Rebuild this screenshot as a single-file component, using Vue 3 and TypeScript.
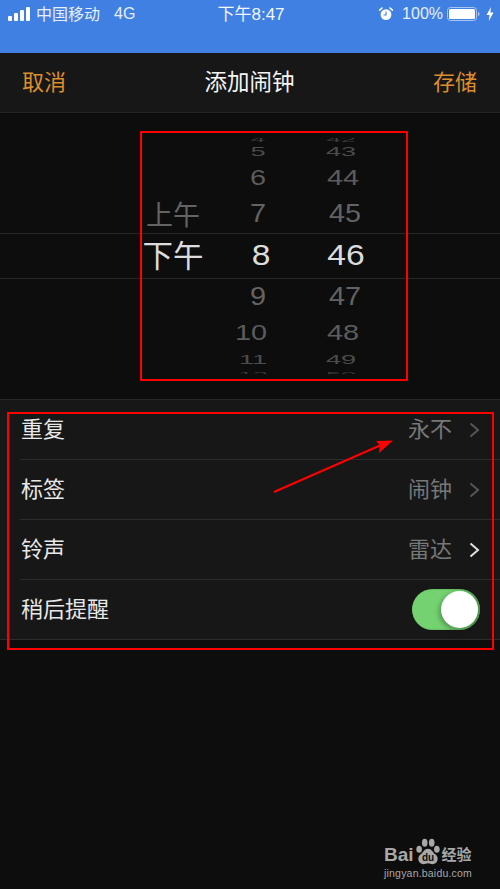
<script setup lang="ts">
interface WheelRow {
  ampm: string
  hour: string
  minute: string
  height: number
  sx: number
  sy: number
  hourX: number
  minuteX: number
  color: string
}

const wheelRows: WheelRow[] = [
  { ampm: '', hour: '4', minute: '42', height: 1, sx: 0.95, sy: 0.25, hourX: 0, minuteX: -4, color: '#3c3c3c' },
  { ampm: '', hour: '5', minute: '43', height: 26, sx: 0.97, sy: 0.47, hourX: 0, minuteX: -4, color: '#4c4c4c' },
  { ampm: '', hour: '6', minute: '44', height: 26, sx: 1.03, sy: 0.82, hourX: 0, minuteX: -2, color: '#5c5c5c' },
  { ampm: '上午', hour: '7', minute: '45', height: 46, sx: 1.03, sy: 0.93, hourX: 0, minuteX: 0, color: '#636363' },
  { ampm: '下午', hour: '8', minute: '46', height: 38, sx: 1.2, sy: 1.03, hourX: 3, minuteX: 1, color: '#dcdcdc' },
  { ampm: '', hour: '9', minute: '47', height: 44, sx: 1.03, sy: 0.93, hourX: 0, minuteX: 0, color: '#636363' },
  { ampm: '', hour: '10', minute: '48', height: 28, sx: 1.03, sy: 0.82, hourX: -7, minuteX: -2, color: '#5c5c5c' },
  { ampm: '', hour: '11', minute: '49', height: 26, sx: 0.97, sy: 0.47, hourX: -5, minuteX: -4, color: '#4c4c4c' },
  { ampm: '', hour: '12', minute: '50', height: 1, sx: 0.95, sy: 0.25, hourX: -5, minuteX: -4, color: '#3c3c3c' },
]

const settings = [
  { label: '重复', value: '永不', chevron: '#565656' },
  { label: '标签', value: '闹钟', chevron: '#565656' },
  { label: '铃声', value: '雷达', chevron: '#e0e0e0' },
]
</script>

<template>
  <div class="screen">
    <header class="status">
      <div class="status-left">
        <svg class="signal" width="22" height="14" viewBox="0 0 22 14">
          <rect x="0" y="9" width="4" height="5" rx="1" />
          <rect x="6" y="6" width="4" height="8" rx="1" />
          <rect x="12" y="3" width="4" height="11" rx="1" />
          <rect x="18" y="0" width="4" height="14" rx="1" />
        </svg>
        <span class="status-cjk">中国移动</span>
        <span class="net">4G</span>
      </div>
      <div class="status-cjk status-time">下午8:47</div>
      <div class="status-right">
        <svg width="14" height="14" viewBox="0 0 14 14">
          <circle cx="7" cy="7.6" r="5.4" fill="#fff" />
          <path d="M7 4.6V8H4.6" fill="none" stroke="#4180e3" stroke-width="1.1" />
          <path d="M0.6 3.2L3 1M13.4 3.2L11 1" stroke="#fff" stroke-width="1.6" stroke-linecap="round" />
        </svg>
        <span class="pct">100%</span>
        <svg class="battery" width="33" height="14" viewBox="0 0 33 14">
          <rect x="0.5" y="0.5" width="29" height="13" rx="3" fill="none" stroke="#a9c6f2" />
          <rect x="2" y="2" width="26" height="10" rx="1.5" fill="#fff" />
          <path d="M31 5v4c1-.3 1.6-1 1.6-2S32 5.300 31 5z" fill="#a9c6f2" />
        </svg>
        <svg width="8" height="14" viewBox="0 0 8 14">
          <path d="M5 0L0.500 8H3.500L2.800 14L7.500 5.500H4.400L5 0Z" fill="#fff" />
        </svg>
      </div>
    </header>

    <nav class="navbar">
      <span class="nav-action">取消</span>
      <span class="nav-title">添加闹钟</span>
      <span class="nav-action">存储</span>
    </nav>

    <section class="picker">
      <div class="band"></div>
      <div class="wheel">
        <div
          v-for="row in wheelRows"
          :key="row.hour"
          class="wheel-row"
          :style="{ height: row.height + 'px', color: row.color }"
        >
          <span class="cell ampm" :class="{ selected: row.ampm === '下午' }">{{ row.ampm }}</span>
          <span class="cell hour" :style="{ transform: `translateX(${row.hourX}px) scale(${row.sx}, ${row.sy})` }">{{ row.hour }}</span>
          <span class="cell minute" :style="{ transform: `translateX(${row.minuteX}px) scale(${row.sx}, ${row.sy})` }">{{ row.minute }}</span>
        </div>
      </div>
    </section>

    <section class="settings">
      <div v-for="item in settings" :key="item.label" class="setting">
        <span class="setting-label">{{ item.label }}</span>
        <span class="setting-value">{{ item.value }}</span>
        <svg class="chevron" width="11" height="16" viewBox="0 0 11 16">
          <path d="M1.500 1.500L9 8L1.500 14.500" fill="none" :stroke="item.chevron" stroke-width="2" />
        </svg>
      </div>
      <div class="setting last">
        <span class="setting-label">稍后提醒</span>
        <div class="toggle"><span class="knob"></span></div>
      </div>
    </section>

    <!-- annotations drawn over the screenshot -->
    <div class="mark mark-picker"></div>
    <div class="mark mark-settings"></div>
    <svg class="arrow" width="500" height="889" viewBox="0 0 500 889">
      <path d="M274 492L380 445.500" stroke="#ff0000" stroke-width="2" fill="none" />
      <path d="M393 440.500L376 441L380 445.500L379 453Z" fill="#ff0000" />
    </svg>

    <div class="watermark">
      <div class="wm-top">
        <span class="wm-bai">Bai</span>
        <svg class="wm-paw" width="26" height="28" viewBox="0 0 26 30">
          <ellipse cx="3.500" cy="12" rx="3" ry="3.800" />
          <ellipse cx="9.500" cy="5" rx="3" ry="4.300" />
          <ellipse cx="17" cy="5" rx="3" ry="4.300" />
          <ellipse cx="22.500" cy="12" rx="3" ry="3.800" />
          <path d="M13 11.500C9 11.500 8 15.500 4.500 18C1 21 2.500 28 8 28C10 28 11.500 27 13 27C14.500 27 16 28 18 28C23.500 28 25 21 21.500 18C18 15.500 17 11.500 13 11.500Z" />
        </svg>
        <span class="wm-du">du</span>
        <span class="wm-cn">经验</span>
      </div>
      <div class="wm-url">jingyan.baidu.com</div>
    </div>
  </div>
</template>

<style>
html,
body {
  margin: 0;
  background: #0d0d0d;
}
</style>

<style scoped>
.screen {
  position: relative;
  width: 500px;
  height: 889px;
  overflow: hidden;
  background: #0d0d0d;
  font-family: "Liberation Sans", "Noto Sans CJK SC", sans-serif;
}
.status {
  box-sizing: border-box;
  height: 53px;
  padding: 0 6px 25px 8px;
  display: grid;
  grid-template-columns: 1fr auto 1fr;
  align-items: center;
  background: #4180e3;
  color: #e6effc;
  font-size: 16px;
}
.status-left,
.status-right {
  display: flex;
  align-items: center;
}
.status-left .signal {
  fill: #fff;
  margin-right: 6px;
}
.status-cjk {
  padding-bottom: 2px;
}
.net {
  margin-left: 14px;
}
.status-time {
  color: #f2f6fd;
  font-size: 17px;
  padding-bottom: 3px;
}
.status-right {
  justify-content: flex-end;
}
.pct {
  margin: 0 4px 0 9px;
}
.battery {
  margin-right: 6px;
}
.navbar {
  box-sizing: border-box;
  height: 60px;
  padding: 0 23px 6px 22px;
  display: flex;
  align-items: center;
  justify-content: space-between;
  background: #171717;
  border-bottom: 1px solid #242424;
  font-size: 22px;
}
.nav-action {
  color: #dd8e2c;
}
.nav-title {
  color: #f4f4f4;
  font-size: 22.500px;
}
.picker {
  position: relative;
  box-sizing: border-box;
  height: 287px;
  padding-top: 25px;
}
.band {
  position: absolute;
  left: 0;
  right: 0;
  top: 120px;
  height: 44px;
  border-top: 1px solid #262626;
  border-bottom: 1px solid #262626;
}
.wheel {
  position: relative;
  height: 236px;
  overflow: hidden;
}
.wheel-row {
  display: grid;
  grid-template-columns: 142px 62px 56px 38px 84px 38px;
  align-items: center;
  font-size: 28px;
}
.cell {
  display: block;
  text-align: center;
  line-height: 0;
  white-space: nowrap;
}
.ampm {
  grid-column: 2;
  font-size: 27px;
  padding-top: 3px;
}
.ampm.selected {
  font-size: 30.500px;
  padding-top: 0;
}
.hour {
  grid-column: 3 / span 2;
  justify-self: start;
  width: 64px;
  margin-left: 22px;
}
.minute {
  grid-column: 5 / span 2;
  justify-self: start;
  width: 64px;
  margin-left: 15px;
}
.settings {
  background: #171717;
  border-top: 1px solid #262626;
  margin-top: -1px;
}
.setting {
  box-sizing: border-box;
  height: 60px;
  margin-left: 20px;
  padding-right: 20px;
  display: flex;
  align-items: center;
  border-bottom: 1px solid #2c2c2c;
  font-size: 22px;
}
.setting.last {
  margin-left: 0;
  padding-left: 20px;
}
.setting-label {
  flex: 1;
  padding: 0 0 6px 1px;
  color: #e8e8e8;
}
.setting-value {
  padding-bottom: 6px;
  color: #787878;
}
.chevron {
  margin-left: 17px;
}
.toggle {
  position: relative;
  width: 68px;
  height: 41px;
  border-radius: 21px;
  background: #74d370;
  box-shadow: inset -2px 0 2px #4a8f48;
}
.knob {
  position: absolute;
  top: 2px;
  right: 2px;
  width: 37px;
  height: 37px;
  border-radius: 50%;
  background: #fff;
  box-shadow: -2px 2px 5px rgba(0, 0, 0, 0.3);
}
.mark {
  position: absolute;
  box-sizing: border-box;
  border: 2px solid #ff0000;
}
.mark-picker {
  left: 140px;
  top: 131px;
  width: 268px;
  height: 250px;
}
.mark-settings {
  left: 7px;
  top: 412px;
  width: 487px;
  height: 238px;
}
.arrow {
  position: absolute;
  left: 0;
  top: 0;
  pointer-events: none;
}
.watermark {
  position: absolute;
  left: 384px;
  top: 836px;
  width: 110px;
  color: #a8a8a8;
}
.wm-top {
  position: relative;
  height: 30px;
  display: flex;
  align-items: flex-end;
}
.wm-bai {
  font-size: 19px;
  font-weight: 700;
  line-height: 22px;
}
.wm-paw {
  margin-left: 1px;
  fill: #a8a8a8;
}
.wm-du {
  position: absolute;
  left: 38px;
  top: 16px;
  font-size: 10px;
  font-weight: 700;
  line-height: 12px;
  color: #0d0d0d;
}
.wm-cn {
  margin-left: 1px;
  font-size: 15px;
  font-weight: 700;
  line-height: 22px;
}
.wm-url {
  font-size: 10.500px;
  line-height: 14px;
  letter-spacing: 0.200px;
  white-space: nowrap;
}
</style>
